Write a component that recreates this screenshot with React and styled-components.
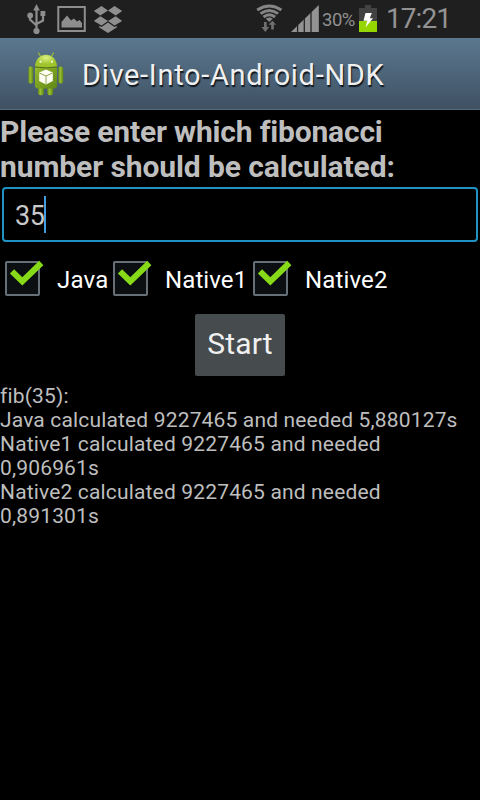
import React from "react";
import styled, { createGlobalStyle } from "styled-components";

const GlobalStyle = createGlobalStyle`
  * { box-sizing: border-box; }
  body { margin: 0; background: #000; overflow: hidden; }
`;

const Screen = styled.main`
  width: 480px;
  height: 800px;
  display: flex;
  flex-direction: column;
  background: #000;
  color: #bebebe;
  font-family: Roboto, sans-serif;
  overflow: hidden;
`;

const StatusBar = styled.header`
  height: 38px;
  flex: none;
  display: flex;
  justify-content: space-between;
  background: #1f1f1f;
`;

const StatusGroup = styled.div`
  display: flex;
  align-items: flex-start;
`;

const StatusIcon = styled.svg`
  display: block;
  flex: none;
  width: ${(p) => p.$w}px;
  height: 38px;
  margin-left: ${(p) => p.$gap || 0}px;
`;

const BatteryLevel = styled.span`
  width: 37px;
  margin-left: 3px;
  font-size: 18.5px;
  line-height: 40px;
  letter-spacing: -0.5px;
  color: #909090;
  white-space: nowrap;
`;

const Clock = styled.time`
  width: 103px;
  padding-left: 9px;
  font-size: 28px;
  line-height: 37px;
  letter-spacing: -0.95px;
  color: #929292;
`;

const TitleBar = styled.div`
  height: 72px;
  flex: none;
  display: flex;
  align-items: center;
  padding-left: 27px;
  background: linear-gradient(#5b788f, #3f5163);
  border-bottom: 1px solid #536b7d;
`;

const AppIcon = styled.svg`
  width: 38px;
  height: 46px;
  flex: none;
`;

const Title = styled.h1`
  margin: 3px 0 0 17px;
  font-size: 29px;
  font-weight: 400;
  line-height: 36px;
  letter-spacing: 0.7px;
  color: #f0f0f0;
  text-shadow: 1px 2px 1px #101820;
  white-space: nowrap;
`;

const Prompt = styled.label`
  height: 75px;
  flex: none;
  padding-top: 4px;
  font-size: 30px;
  font-weight: 700;
  line-height: 35px;
  color: #bebebe;
  white-space: nowrap;
`;

const PromptLine = styled.span`
  display: block;
  letter-spacing: ${(p) => p.$spacing}px;
`;

const NumberField = styled.div`
  height: 55px;
  flex: none;
  margin: 2px 2px 0;
  padding-left: 11px;
  display: flex;
  align-items: center;
  border: 2px solid #2093c4;
  border-radius: 4px;
  font-size: 27px;
  color: #c9c9c9;
`;

const FieldValue = styled.span`
  padding-top: 2px;
  letter-spacing: -0.5px;
`;

const Caret = styled.span`
  width: 2px;
  height: 37px;
  background: #449bdd;
`;

const Options = styled.div`
  height: 72px;
  flex: none;
  display: flex;
  align-items: flex-start;
  padding: 17px 0 0 5px;
`;

const Option = styled.label`
  width: ${(p) => p.$width}px;
  flex: none;
  display: flex;
  color: #fff;
  font-size: 24px;
  line-height: 38px;
  white-space: nowrap;
`;

const CheckIcon = styled.svg`
  width: 40px;
  height: 38px;
  margin-right: 12px;
  flex: none;
`;

const OptionText = styled.span`
  padding-top: 2px;
  letter-spacing: ${(p) => p.$spacing}px;
`;

const StartButton = styled.button`
  width: 90px;
  height: 62px;
  flex: none;
  align-self: center;
  padding: 0 0 4px;
  border: 0;
  border-radius: 2px;
  background: #464b4e;
  color: #f0f0f0;
  font: 400 30px Roboto, sans-serif;
  letter-spacing: 0.2px;
`;

const Results = styled.div`
  padding-top: 8px;
  font-size: 21px;
  line-height: 24px;
  letter-spacing: 0.16px;
  color: #bebebe;
  white-space: nowrap;
`;

const ResultLine = styled.div`
  height: 24px;
`;

function UsbIcon() {
  return (
    <StatusIcon $w={20} $gap={27} viewBox="0 0 20 38" fill="none" stroke="#8e8e8e" strokeWidth="2.2">
      <path d="M9.5 8V31M3 17V19.5L9.5 25.5M16 15V20.5L9.5 24" />
      <path d="M9.5 4L12.8 10.5H6.2Z" fill="#8e8e8e" stroke="none" />
      <circle cx="3.2" cy="15.5" r="2.9" fill="#8e8e8e" stroke="none" />
      <path d="M13.5 11H18.3V16H13.5Z" fill="#8e8e8e" stroke="none" />
      <circle cx="9.5" cy="31" r="3.1" fill="#8e8e8e" stroke="none" />
    </StatusIcon>
  );
}

function PictureIcon() {
  return (
    <StatusIcon $w={30} $gap={10} viewBox="0 0 30 38">
      <path d="M1.3 7H27.8V31H1.3Z" fill="none" stroke="#8e8e8e" strokeWidth="2" />
      <path d="M4.5 27.5V22L10 15.5L14 20.5L17 18.5L20 21.5L22.5 20L25 23V27.5Z" fill="#8e8e8e" />
    </StatusIcon>
  );
}

function DropboxIcon() {
  return (
    <StatusIcon $w={30} $gap={6} viewBox="0 0 30 38" fill="#8e8e8e">
      <path d="M8.5 6L15 10.5L7.3 15.5L.8 11ZM21.5 6L29.2 11L22.7 15.5L15 10.5ZM7.3 16.3L15 21L8.5 25.5L.8 21ZM22.7 16.3L29.2 21L21.5 25.5L15 21Z" />
      <path d="M15 22.5L21.5 27L23.7 25.8V27.5L15 33L6.3 27.5V25.8L8.5 27Z" />
    </StatusIcon>
  );
}

function WifiIcon() {
  return (
    <StatusIcon $w={28} viewBox="0 0 28 38" fill="none" stroke="#858585" strokeWidth="2.9">
      <path d="M1.2 10Q13.3 2 25.4 10M4.5 13.6Q13.3 7.2 22.1 13.6M7.5 17Q13.3 12.6 19.1 17" />
      <path d="M9.8 18.8Q13.3 16.2 16.8 18.8L13.3 22Z" fill="#858585" stroke="none" />
      <path d="M8 22H10.7V27H13.2L9.3 32L5.5 27H8ZM15.2 29.5H17.8V24.8H20L16.5 20.8L12.5 24.8H15.2Z" fill="#707070" stroke="none" />
    </StatusIcon>
  );
}

function SignalIcon() {
  return (
    <StatusIcon $w={28} $gap={7} viewBox="0 0 28 38">
      <path d="M0 32L27.8 5V32Z" fill="#939393" />
      <path d="M6.6 25V32M13.3 18V32M20 12V32" stroke="#252525" strokeWidth="1.3" />
    </StatusIcon>
  );
}

function BatteryIcon() {
  return (
    <StatusIcon $w={18} viewBox="0 0 18 38">
      <path d="M6 5H12V8H18V32H0V8H6Z" fill="#424242" />
      <path d="M0 21H18V32H0Z" fill="#95d600" />
      <path d="M6.5 13H12.8L10.8 18.3H14L6.5 27.5L8.3 20.8H4.5Z" fill="#fff" />
    </StatusIcon>
  );
}

function AndroidIcon() {
  return (
    <AppIcon viewBox="0 0 38 46">
      <defs>
        <linearGradient id="robotBody" x1="0" y1="0" x2="1" y2="1">
          <stop stopColor="#98bb2c" />
          <stop offset="1" stopColor="#5f8518" />
        </linearGradient>
        <radialGradient id="robotHead" cy=".25">
          <stop stopColor="#dcf083" />
          <stop offset="1" stopColor="#9fc42c" />
        </radialGradient>
        <linearGradient id="robotLimb">
          <stop stopColor="#648a1b" />
          <stop offset=".4" stopColor="#9abf30" />
          <stop offset="1" stopColor="#5c8119" />
        </linearGradient>
      </defs>
      <path d="M11.5 2L14 6M26.5 2L24 6" stroke="#9abb35" strokeWidth="1.3" strokeLinecap="round" />
      <rect x="11" y="32" width="6" height="12.3" rx="2.8" fill="url(#robotLimb)" />
      <rect x="20.2" y="32" width="6" height="12.3" rx="2.8" fill="url(#robotLimb)" />
      <rect x="1.3" y="15.5" width="5" height="17" rx="2.2" fill="url(#robotLimb)" />
      <rect x="31.3" y="15.5" width="5" height="17" rx="2.2" fill="url(#robotLimb)" />
      <path d="M8 16H30V34.5Q30 37.5 27 37.5H11Q8 37.5 8 34.5Z" fill="url(#robotBody)" />
      <path d="M8 15.6C8.3 -.3 29.7 -.3 30 15.6Q19 17.5 8 15.6Z" fill="url(#robotHead)" />
      <path d="M8 16Q19 17.7 30 16" fill="none" stroke="#536f19" strokeWidth="1" />
      <circle cx="13.5" cy="10.7" r="1" fill="#fff" />
      <circle cx="25" cy="10.7" r="1" fill="#fff" />
      <path d="M19 18.5L25.8 21.5V30L19 33.5L12.2 30V21.5Z" fill="#fffef5" />
      <path d="M12.5 22L19 25L25.5 22M19 25V33" fill="none" stroke="#8ba44c" strokeWidth="1" />
    </AppIcon>
  );
}

function Check({ label, width, spacing }) {
  return (
    <Option $width={width}>
      <CheckIcon viewBox="0 0 40 38">
        <rect x="1" y="3" width="33" height="33" rx="1" fill="#0c0f11" stroke="#687077" strokeWidth="2" />
        <path d="M7 12.3L17.3 22.3L36.3 4" fill="none" stroke="#86da18" strokeWidth="6" />
      </CheckIcon>
      <OptionText $spacing={spacing}>{label}</OptionText>
    </Option>
  );
}

const results = [
  "fib(35):",
  "Java calculated 9227465 and needed 5,880127s",
  "Native1 calculated 9227465 and needed",
  "0,906961s",
  "Native2 calculated 9227465 and needed",
  "0,891301s",
];

export default function App() {
  return (
    <>
      <GlobalStyle />
      <Screen>
        <StatusBar>
          <StatusGroup><UsbIcon /><PictureIcon /><DropboxIcon /></StatusGroup>
          <StatusGroup>
            <WifiIcon />
            <SignalIcon />
            <BatteryLevel>30%</BatteryLevel>
            <BatteryIcon />
            <Clock>17:21</Clock>
          </StatusGroup>
        </StatusBar>
        <TitleBar><AndroidIcon /><Title>Dive-Into-Android-NDK</Title></TitleBar>
        <Prompt>
          <PromptLine $spacing={-0.18}>Please enter which fibonacci</PromptLine>
          <PromptLine $spacing={-0.1}>number should be calculated:</PromptLine>
        </Prompt>
        <NumberField><FieldValue>35</FieldValue><Caret /></NumberField>
        <Options>
          <Check label="Java" width={108} spacing={0.2} />
          <Check label="Native1" width={140} spacing={0.1} />
          <Check label="Native2" width={140} spacing={0.15} />
        </Options>
        <StartButton>Start</StartButton>
        <Results>
          {results.map((text) => (
            <ResultLine key={text}>{text}</ResultLine>
          ))}
        </Results>
      </Screen>
    </>
  );
}
